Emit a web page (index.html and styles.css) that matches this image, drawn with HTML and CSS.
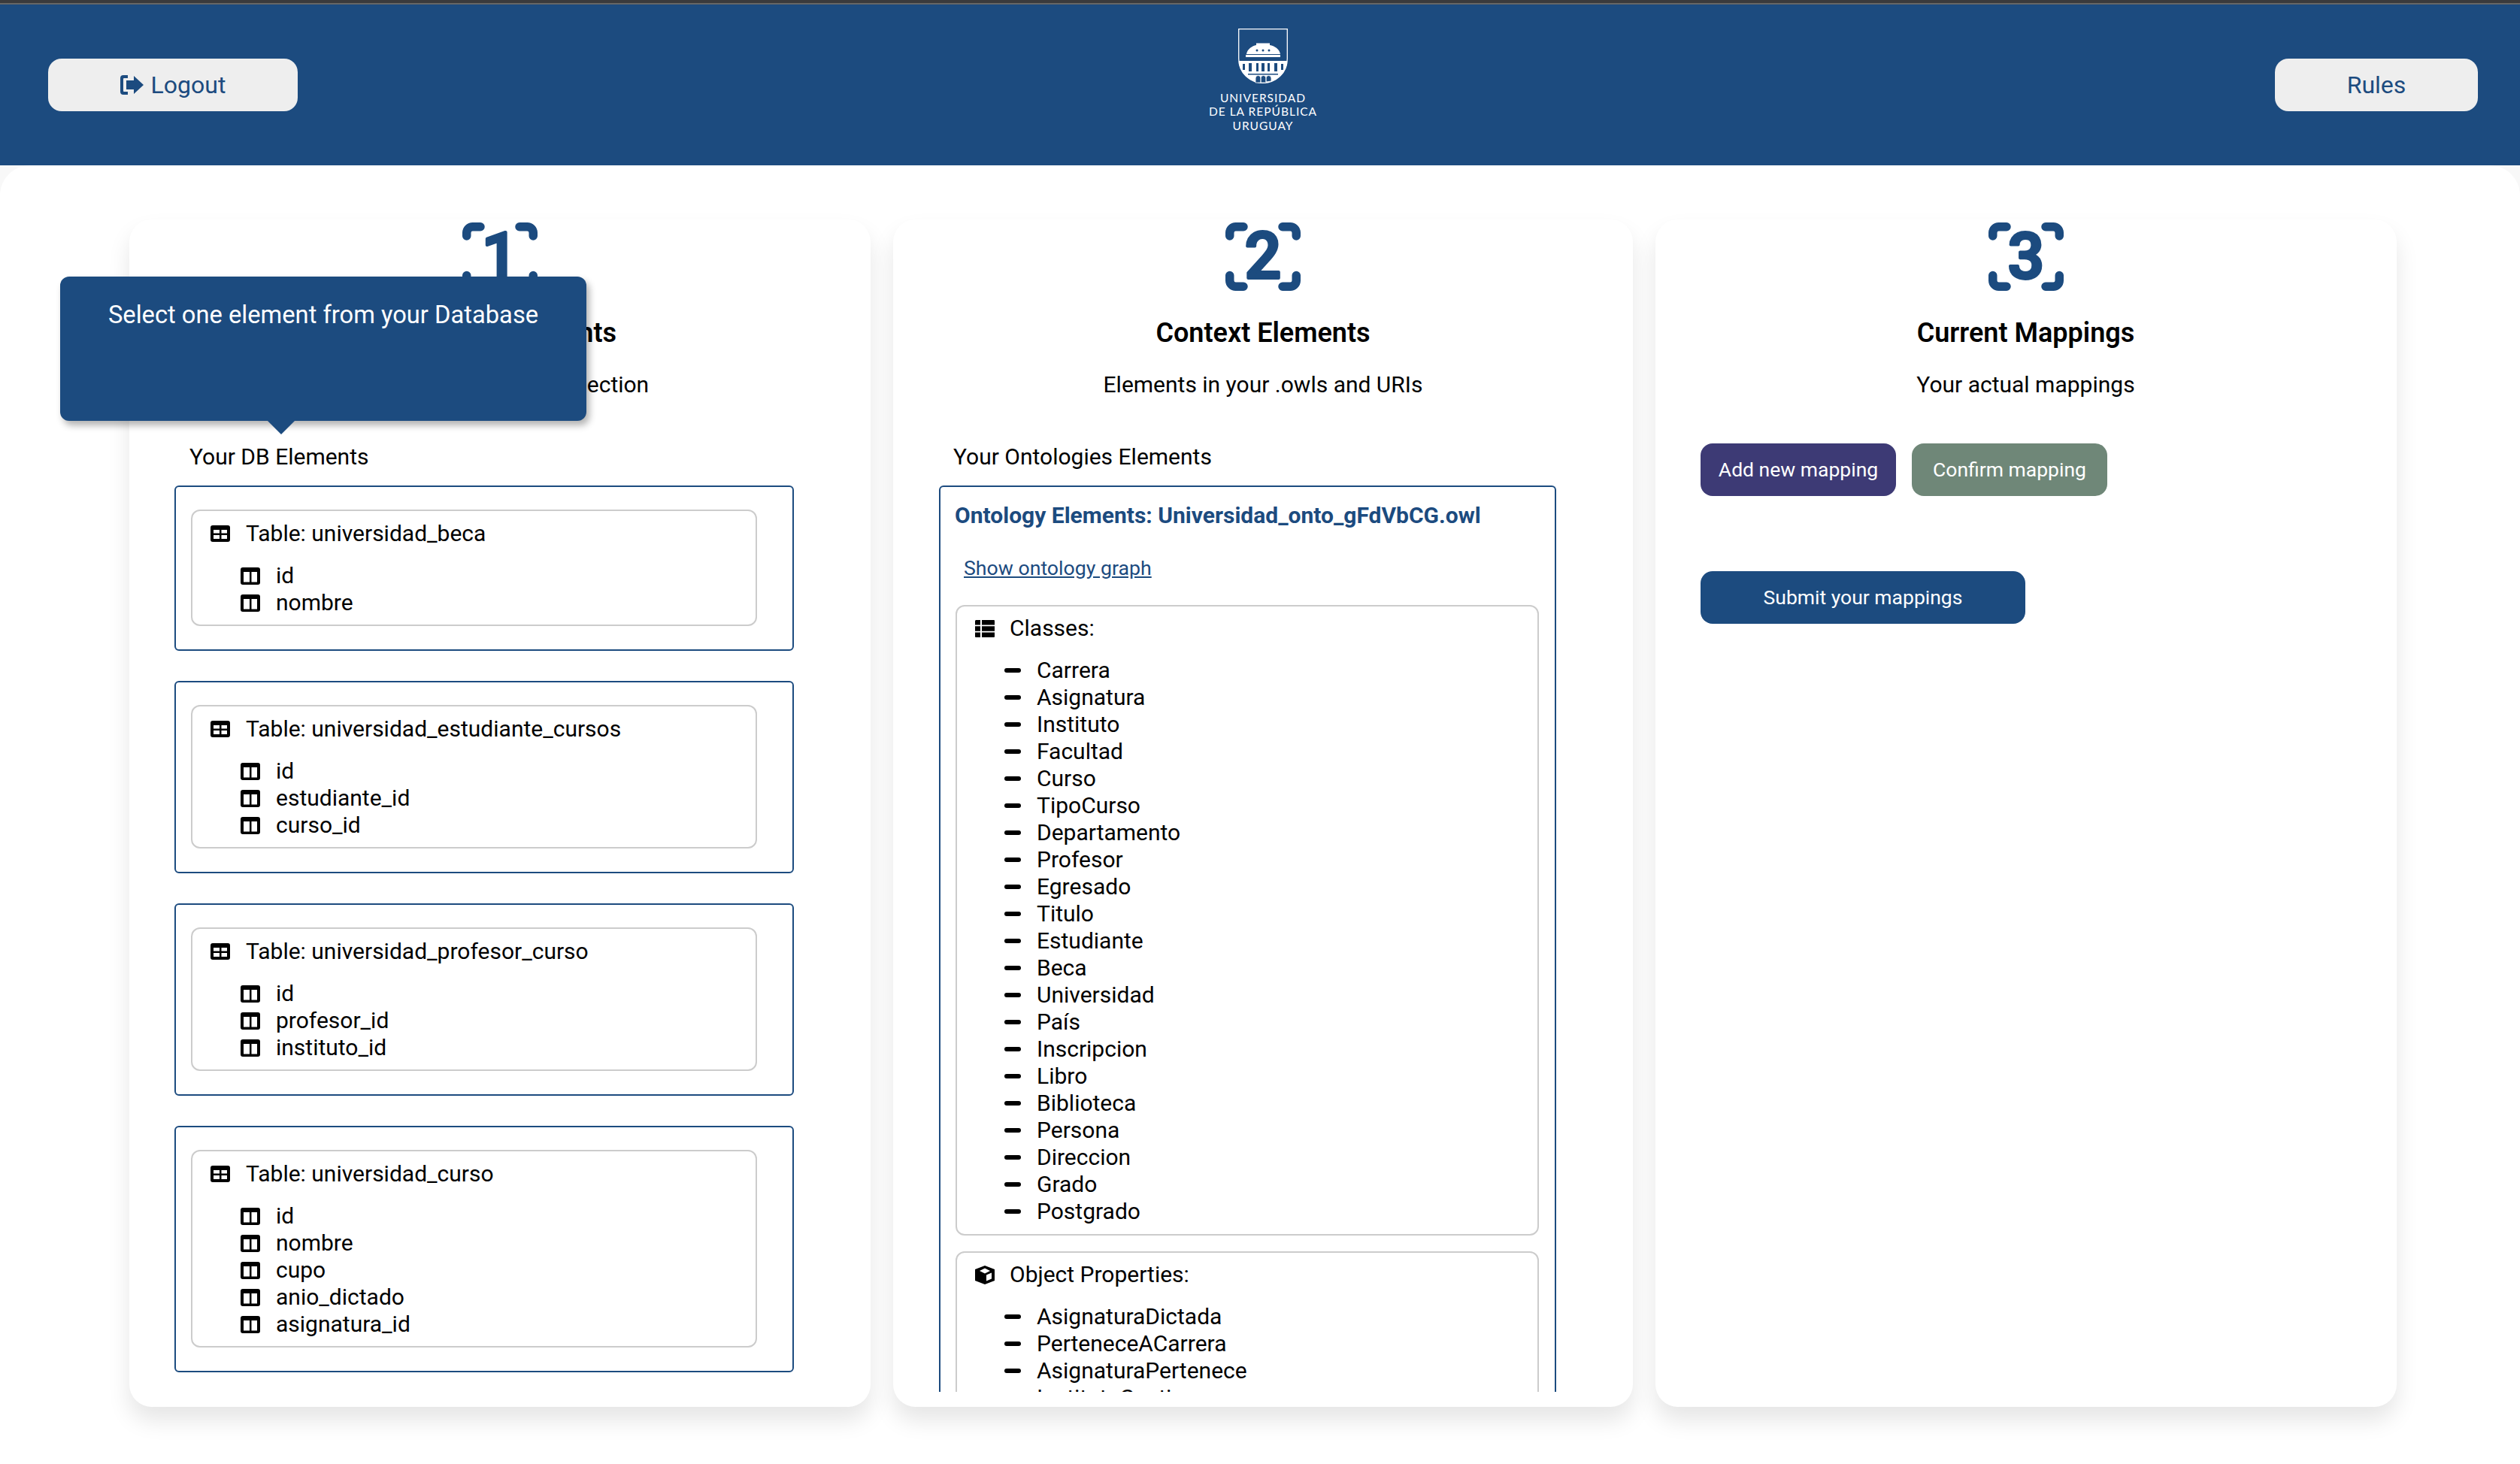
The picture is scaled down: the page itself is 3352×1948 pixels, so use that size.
FILE: index.html
```html
<!DOCTYPE html>
<html lang="en">
<head>
  <meta charset="UTF-8">
  <meta name="viewport" content="width=device-width, initial-scale=1.0">
  <title>Mappings</title>
  <link rel="stylesheet" href="styles.css">
</head>
<body>

  <!-- Shared icons -->
  <svg class="icon-defs" aria-hidden="true">
    <symbol id="ico-table" viewBox="0 0 26 22">
      <path fill-rule="evenodd" d="M3 0H23A3 3 0 0 1 26 3V19A3 3 0 0 1 23 22H3A3 3 0 0 1 0 19V3A3 3 0 0 1 3 0ZM4 6V10.500H12V6ZM14.500 6V10.500H22V6ZM4 13V18H12V13ZM14.500 13V18H22V13Z"/>
    </symbol>
    <symbol id="ico-col" viewBox="0 0 26 23">
      <path fill-rule="evenodd" d="M3 0H23A3 3 0 0 1 26 3V20A3 3 0 0 1 23 23H3A3 3 0 0 1 0 20V3A3 3 0 0 1 3 0ZM4 6V19.500H12V6ZM14.500 6V19.500H22V6Z"/>
    </symbol>
    <symbol id="ico-list" viewBox="0 0 26 23">
      <path d="M1 0H7V6.500H0V1ZM9 0H25A1 1 0 0 1 26 1V6.500H9ZM0 8.300H7V14.700H0ZM9 8.300H26V14.700H9ZM0 16.500H7V23H1A1 1 0 0 1 0 22ZM9 16.500H26V22A1 1 0 0 1 25 23H9Z"/>
    </symbol>
    <symbol id="ico-cube" viewBox="0 0 26 25">
      <path fill-rule="evenodd" d="M13 0L26 5V20L13 25L0 20V5ZM13 3.500L6 7L13 10.500L20 7ZM15 12.500V20.500L22 17.500V9.500Z"/>
    </symbol>
    <symbol id="ico-corners" viewBox="0 0 100 91">
      <path fill="none" stroke="currentColor" stroke-width="11.500" stroke-linecap="round" stroke-linejoin="round" d="M5.750 18V13.750A8 8 0 0 1 13.750 5.750H24M76 5.750H86.250A8 8 0 0 1 94.250 13.750V18M94.250 70.500V77.250A8 8 0 0 1 86.250 85.250H76M24 85.250H13.750A8 8 0 0 1 5.750 77.250V70.500"/>
    </symbol>
  </svg>

  <header class="top-bar">
    <button class="top-btn">
      <svg class="logout-icon" viewBox="0 0 31 26" fill="currentColor"><path d="M10 0H4A4 4 0 0 0 0 4V22A4 4 0 0 0 4 26H10V22H5A1 1 0 0 1 4 21V5A1 1 0 0 1 5 4H10ZM18 1V7H8V19H18V25L31 13Z"/></svg>
      Logout
    </button>

    <div class="logo">
      <svg class="logo-shield" viewBox="0 0 66 73">
        <path d="M.7.7H65.300V40C65.300 59 50 72.300 33 72.300S.7 59 .7 40Z" fill="none" stroke="#fff" stroke-width="1.300"/>
        <path d="M.7 43H65.300C65 60 50 72.300 33 72.300S1 60 .7 43Z" fill="#fff"/>
        <path d="M11 34C12 27 19 23 24 22V19.500H42V22C48 23 55 27 56 34Z" fill="#fff"/>
        <path d="M10 35H56V38H10Z" fill="#fff"/>
        <circle cx="25" cy="29" r="1.500" fill="#1c4b7f"/>
        <circle cx="33" cy="29" r="1.500" fill="#1c4b7f"/>
        <circle cx="41" cy="29" r="1.500" fill="#1c4b7f"/>
        <path d="M6 47H9V55H6ZM14 46H18V57H14ZM24 46H27V57H24ZM31 46H35V57H31ZM39 46H42V57H39ZM48 46H52V57H48ZM57 47H60V55H57ZM13 60H53V61.500H13Z" fill="#1c4b7f"/>
        <path d="M23 72V66A3.500 3.500 0 0 1 30 66V72ZM30 72V66A3.500 3.500 0 0 1 37 66V72ZM37 71V66A3.500 3.500 0 0 1 44 66V70Z" fill="#1c4b7f" stroke="#fff" stroke-width=".8"/>
      </svg>
      <div class="logo-text">UNIVERSIDAD<br>DE LA REPÚBLICA<br>URUGUAY</div>
    </div>

    <button class="top-btn top-btn-rules">Rules</button>
  </header>

  <main class="board">

    <!-- Step 1: database -->
    <section class="step-card">
      <svg class="step-number" viewBox="0 0 100 91">
        <use href="#ico-corners" width="100" height="91"/>
        <text class="digit" x="50" y="74">1</text>
      </svg>
      <h3 class="step-title">Database Elements</h3>
      <p class="step-sub">Entities in your DB connection</p>
      <div class="section-label">Your DB Elements</div>

      <div class="outer-box">
        <div class="inner-box">
          <div class="inner-title"><svg class="ico-t"><use href="#ico-table"/></svg>Table: universidad_beca</div>
          <ul class="col-list">
            <li><svg class="ico-c"><use href="#ico-col"/></svg>id</li>
            <li><svg class="ico-c"><use href="#ico-col"/></svg>nombre</li>
          </ul>
        </div>
      </div>

      <div class="outer-box">
        <div class="inner-box">
          <div class="inner-title"><svg class="ico-t"><use href="#ico-table"/></svg>Table: universidad_estudiante_cursos</div>
          <ul class="col-list">
            <li><svg class="ico-c"><use href="#ico-col"/></svg>id</li>
            <li><svg class="ico-c"><use href="#ico-col"/></svg>estudiante_id</li>
            <li><svg class="ico-c"><use href="#ico-col"/></svg>curso_id</li>
          </ul>
        </div>
      </div>

      <div class="outer-box">
        <div class="inner-box">
          <div class="inner-title"><svg class="ico-t"><use href="#ico-table"/></svg>Table: universidad_profesor_curso</div>
          <ul class="col-list">
            <li><svg class="ico-c"><use href="#ico-col"/></svg>id</li>
            <li><svg class="ico-c"><use href="#ico-col"/></svg>profesor_id</li>
            <li><svg class="ico-c"><use href="#ico-col"/></svg>instituto_id</li>
          </ul>
        </div>
      </div>

      <div class="outer-box">
        <div class="inner-box">
          <div class="inner-title"><svg class="ico-t"><use href="#ico-table"/></svg>Table: universidad_curso</div>
          <ul class="col-list">
            <li><svg class="ico-c"><use href="#ico-col"/></svg>id</li>
            <li><svg class="ico-c"><use href="#ico-col"/></svg>nombre</li>
            <li><svg class="ico-c"><use href="#ico-col"/></svg>cupo</li>
            <li><svg class="ico-c"><use href="#ico-col"/></svg>anio_dictado</li>
            <li><svg class="ico-c"><use href="#ico-col"/></svg>asignatura_id</li>
          </ul>
        </div>
      </div>

      <!-- Tour tooltip -->
      <div class="tour-tip">Select one element from your Database</div>
    </section>

    <!-- Step 2: ontologies -->
    <section class="step-card">
      <svg class="step-number" viewBox="0 0 100 91">
        <use href="#ico-corners" width="100" height="91"/>
        <text class="digit" x="50" y="74">2</text>
      </svg>
      <h3 class="step-title">Context Elements</h3>
      <p class="step-sub">Elements in your .owls and URIs</p>
      <div class="section-label">Your Ontologies Elements</div>

      <div class="onto-box">
        <div class="onto-title">Ontology Elements: Universidad_onto_gFdVbCG.owl</div>
        <a class="onto-link" href="#">Show ontology graph</a>

        <div class="inner-box onto-group">
          <div class="group-title"><svg class="ico-t"><use href="#ico-list"/></svg>Classes:</div>
          <ul class="dash-list">
            <li>Carrera</li>
            <li>Asignatura</li>
            <li>Instituto</li>
            <li>Facultad</li>
            <li>Curso</li>
            <li>TipoCurso</li>
            <li>Departamento</li>
            <li>Profesor</li>
            <li>Egresado</li>
            <li>Titulo</li>
            <li>Estudiante</li>
            <li>Beca</li>
            <li>Universidad</li>
            <li>País</li>
            <li>Inscripcion</li>
            <li>Libro</li>
            <li>Biblioteca</li>
            <li>Persona</li>
            <li>Direccion</li>
            <li>Grado</li>
            <li>Postgrado</li>
          </ul>
        </div>

        <div class="inner-box onto-group">
          <div class="group-title"><svg class="ico-t ico-cube"><use href="#ico-cube"/></svg>Object Properties:</div>
          <ul class="dash-list">
            <li>AsignaturaDictada</li>
            <li>PerteneceACarrera</li>
            <li>AsignaturaPertenece</li>
            <li>InstitutoGestiona</li>
          </ul>
        </div>
      </div>
    </section>

    <!-- Step 3: mappings -->
    <section class="step-card">
      <svg class="step-number" viewBox="0 0 100 91">
        <use href="#ico-corners" width="100" height="91"/>
        <text class="digit" x="50" y="74">3</text>
      </svg>
      <h3 class="step-title">Current Mappings</h3>
      <p class="step-sub">Your actual mappings</p>

      <div class="map-actions">
        <button class="map-btn btn-add">Add new mapping</button>
        <button class="map-btn btn-confirm">Confirm mapping</button>
      </div>
      <button class="map-btn btn-submit">Submit your mappings</button>
    </section>

  </main>

</body>
</html>
```

FILE: styles.css
```css
* {
  box-sizing: border-box;
}

html, body {
  height: 100%;
}

body {
  margin: 0;
  overflow: hidden;
  background-color: #f8f8f8;
  color: #000;
  font-family: Roboto, "Liberation Sans", sans-serif;
  font-size: 30px;
  line-height: 36px;
}

.icon-defs {
  display: none;
}

/* Header */
.top-bar {
  height: 220px;
  padding: 2px 56px 0 64px;
  display: grid;
  grid-template-columns: 1fr auto 1fr;
  align-items: center;
  background-color: #1c4b7f;
  border-top: 4px solid #3a3a3c;
  box-shadow: inset 0 2px 0 #666;
}

.top-btn {
  width: 332px;
  height: 70px;
  display: flex;
  align-items: center;
  justify-content: center;
  gap: 10px;
  border: none;
  border-radius: 18px;
  background-color: #eee;
  color: #1c4b7f;
  font: inherit;
  font-size: 32px;
}

.top-btn-rules {
  width: 270px;
  justify-self: end;
}

.logout-icon {
  width: 31px;
  height: 26px;
}

.logo {
  margin-top: -12px;
  display: flex;
  flex-direction: column;
  align-items: center;
  color: #fff;
}

.logo-shield {
  width: 66px;
  height: 73px;
}

.logo-text {
  margin-top: 10px;
  font-family: Lato, "Open Sans", sans-serif;
  font-size: 15.500px;
  line-height: 18.500px;
  letter-spacing: 1px;
  text-align: center;
}

/* Three columns */
.board {
  height: 1728px;
  padding: 72px 164px 0 172px;
  display: grid;
  grid-template-columns: 986px 984px 986px;
  column-gap: 30px;
  align-items: start;
  border-radius: 40px 40px 0 0;
  background-color: #fff;
}

.step-card {
  position: relative;
  height: 1580px;
  padding: 4px 102px 0 60px;
  display: flex;
  flex-direction: column;
  border-radius: 30px;
  background-color: #fff;
  box-shadow: 0 18px 30px rgba(0, 0, 0, 0.1);
}

.step-card:nth-child(2) {
  padding-left: 61px;
}

.step-number {
  flex: none;
  align-self: center;
  width: 100px;
  height: 91px;
  margin-right: -41px;
  color: #1c4b7f;
}

.digit {
  fill: currentColor;
  stroke: currentColor;
  stroke-width: 4;
  stroke-linejoin: round;
  text-anchor: middle;
  font-size: 85px;
  font-weight: 500;
}

.step-title {
  margin: 38px -41px 0 0;
  text-align: center;
  font-size: 36px;
  line-height: 36px;
  font-weight: 600;
}

.step-sub {
  margin: 33px -41px 0 0;
  text-align: center;
}

.section-label {
  margin: 60px 0 20px 20px;
}

.step-card:nth-child(2) .section-label {
  margin-left: 19px;
}

/* Boxes */
.outer-box {
  margin-bottom: 40px;
  padding: 30px 47px 31px 20px;
  border: 2px solid #1c4b7f;
  border-radius: 6px;
}

.inner-box {
  padding: 12px 24px 11px 24px;
  border: 2px solid #ccc;
  border-radius: 12px;
}

.inner-title,
.group-title {
  display: flex;
  align-items: center;
}

.ico-t {
  width: 26px;
  height: 22px;
  margin-right: 21px;
}

.col-list,
.dash-list {
  margin: 20px 0 0;
  padding: 0;
  list-style: none;
}

.col-list {
  margin-left: 40px;
}

.col-list li {
  display: flex;
  align-items: center;
}

.ico-c {
  width: 26px;
  height: 23px;
  margin-right: 21px;
}

/* Ontology panel */
.onto-box {
  height: 1206px;
  padding: 20px 21px 0 20px;
  overflow: hidden;
  border: 2px solid #1c4b7f;
  border-bottom: none;
  border-radius: 6px 6px 0 0;
}

.onto-title {
  margin-left: -1px;
  color: #1c4b7f;
  font-weight: 700;
}

.onto-link {
  display: block;
  margin: 34px 0 31px 11px;
  color: #1c4b7f;
  font-size: 26.700px;
}

.onto-group {
  margin-bottom: 21px;
  padding-top: 11px;
  padding-bottom: 12px;
}

.group-title .ico-t {
  height: 23px;
  margin-right: 20px;
}

.group-title .ico-cube {
  height: 25px;
}

.dash-list {
  margin-left: 39px;
}

.dash-list li {
  display: flex;
  align-items: center;
}

.dash-list li::before {
  content: "";
  width: 22px;
  height: 6px;
  margin-right: 21px;
  border-radius: 3px;
  background-color: #000;
}

/* Mapping buttons */
.map-actions {
  margin-top: 60px;
  display: flex;
  gap: 21px;
}

.map-btn {
  width: 260px;
  height: 70px;
  border: none;
  border-radius: 16px;
  color: #fff;
  font: inherit;
  font-size: 26.500px;
}

.btn-add {
  background-color: #3d3a75;
}

.btn-confirm {
  background-color: #6f8778;
}

.btn-submit {
  width: 432px;
  margin-top: 100px;
  background-color: #1c4b7f;
}

/* Tour tooltip */
.tour-tip {
  position: absolute;
  left: -92px;
  top: 76px;
  width: 700px;
  height: 192px;
  padding: 33px 10px 0;
  border-radius: 12px;
  background-color: #1c4b7f;
  color: #fff;
  font-size: 32.700px;
  text-align: center;
  box-shadow: 4px 6px 10px rgba(0, 0, 0, 0.3);
}

.tour-tip::after {
  content: "";
  position: absolute;
  left: 276px;
  top: 192px;
  border-left: 18px solid transparent;
  border-right: 18px solid transparent;
  border-top: 18px solid #1c4b7f;
}
```
